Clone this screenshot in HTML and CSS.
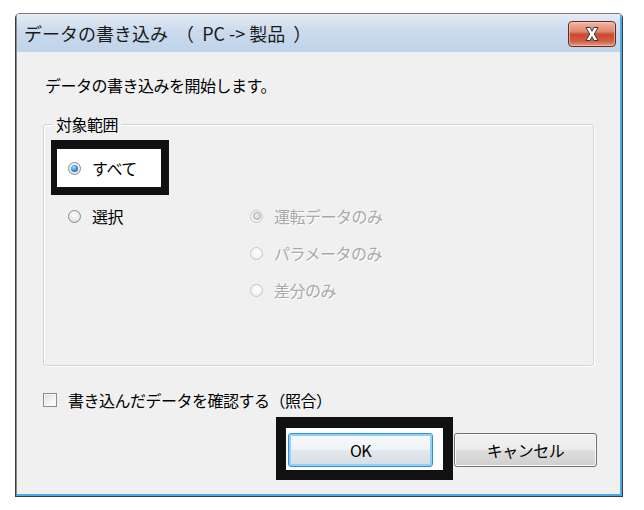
FILE: index.html
```html
<!DOCTYPE html>
<html lang="ja">
<head>
<meta charset="utf-8">
<title>データの書き込み</title>
<link rel="stylesheet" href="styles.css">
</head>
<body>
<div class="window">
  <div class="frame">
    <div class="titlebar">
      <span class="title">データの書き込み  （  PC -&gt; 製品  ）</span>
      <span class="close">
        <svg width="18" height="16" viewBox="0 0 18 16"><path d="M3 1.5 L7.2 1.5 L9 5.3 L10.8 1.5 L15 1.5 L11.3 8 L15 14.5 L10.8 14.5 L9 10.7 L7.2 14.5 L3 14.5 L6.7 8 Z" fill="#ffffff" stroke="#3c3c3c" stroke-width="1" stroke-linejoin="round"/></svg>
      </span>
    </div>
    <div class="content">
      <p class="intro">データの書き込みを開始します。</p>
      <fieldset class="group">
        <legend>対象範囲</legend>
        <div class="mark mark-all">
          <label class="opt"><span class="radio"><span class="dot"></span></span>すべて</label>
        </div>
        <div class="select-row">
          <label class="opt opt-select"><span class="radio"></span>選択</label>
          <div class="sub">
            <label class="opt disabled"><span class="radio"><span class="dot"></span></span>運転データのみ</label>
            <label class="opt disabled"><span class="radio"></span>パラメータのみ</label>
            <label class="opt disabled"><span class="radio"></span>差分のみ</label>
          </div>
        </div>
      </fieldset>
      <label class="check"><span class="box"></span>書き込んだデータを確認する（照合）</label>
      <div class="buttons">
        <div class="mark mark-ok"><button class="btn default">OK</button></div>
        <button class="btn cancel">キャンセル</button>
      </div>
    </div>
  </div>
</div>
</body>
</html>
```

FILE: styles.css
```css
* { box-sizing: border-box; }

body {
  margin: 0;
  background: #ffffff;
  font-family: "Noto Sans CJK JP", "Noto Sans", sans-serif;
  color: #000;
}

.window {
  margin: 13px 0 0 15px;
  width: 608px;
  height: 484px;
  border: 1px solid #3a3a3a;
  border-top-color: #7a7a7a;
  border-radius: 5px 5px 0 0;
  overflow: hidden;
}

.frame {
  height: 100%;
  background: #f0f0f0;
  border-left: 1px solid #8a8a8a;
  border-right: 2px solid #48aaea;
  border-bottom: 2px solid #48aaea;
  display: flex;
  flex-direction: column;
}

.titlebar {
  height: 38px;
  flex: none;
  display: flex;
  align-items: center;
  justify-content: space-between;
  padding-left: 7px;
  background: linear-gradient(#e4ecf5 0%, #cbdaec 45%, #bfd3e9 100%);
}

.title {
  font-size: 18px;
  color: #1a1a1a;
  white-space: pre;
}

.close {
  align-self: flex-start;
  margin-top: 7px;
  margin-right: 4px;
  width: 48px;
  height: 26px;
  border: 1px solid #5e2a22;
  border-radius: 4px;
  background: linear-gradient(#efb6a6 0%, #e3846c 40%, #cc4a30 52%, #d2603f 80%, #e89c84 100%);
  box-shadow: inset 0 0 0 1px rgba(255, 215, 200, 0.55);
  display: flex;
  align-items: center;
  justify-content: center;
}

.content {
  flex: 1;
  padding: 0 23px 0 26px;
}

.intro {
  margin: 22px 0 0;
  padding-left: 2px;
  height: 22px;
  line-height: 22px;
  font-size: 16px;
  letter-spacing: -0.5px;
}

.group {
  margin: 17px 0 0;
  padding: 0 0 64px 0;
  width: 551px;
  min-width: 0;
  border: 1px solid #d3d3d3;
  border-radius: 3px;
  box-shadow: inset 1px 1px 0 #ffffff, 1px 1px 0 #ffffff;
}

.group legend {
  margin-left: 9px;
  padding: 0 3px;
  line-height: 22px;
  font-size: 16px;
  letter-spacing: -0.5px;
}

.mark {
  border-style: solid;
  border-color: #111111;
  background: #ffffff;
}

.mark-all {
  margin: 5px 0 0 7px;
  width: 118px;
  height: 55px;
  border-width: 9px 8px 8px 6px;
  padding-left: 11px;
  display: flex;
  align-items: center;
}

.opt {
  display: flex;
  align-items: center;
  height: 22px;
  font-size: 16px;
  letter-spacing: -0.5px;
  white-space: nowrap;
}

.radio {
  flex: none;
  width: 13px;
  height: 13px;
  margin-right: 11px;
  border-radius: 50%;
  border: 1px solid #8c8c8c;
  background: radial-gradient(circle at 50% 35%, #ffffff 0%, #e6e6e6 65%, #cfcfcf 100%);
  display: flex;
  align-items: center;
  justify-content: center;
}

.dot {
  width: 7px;
  height: 7px;
  border-radius: 50%;
  background: radial-gradient(circle at 40% 35%, #a8dcff 0%, #2f86d6 55%, #18599e 100%);
}

.select-row {
  margin-top: 10px;
  padding-left: 24px;
  display: flex;
  align-items: flex-start;
}

.opt-select {
  width: 182px;
}

.sub {
  display: flex;
  flex-direction: column;
  gap: 15px;
}

.disabled {
  color: #a9a9a9;
  text-shadow: 1px 1px 0 #ffffff;
}

.disabled .radio {
  border-color: #c6c6c6;
  background: radial-gradient(circle at 50% 35%, #ffffff 0%, #f2f2f2 70%, #e6e6e6 100%);
}

.disabled .dot {
  width: 8px;
  height: 8px;
  border: 1px solid #a6a6a6;
  background: radial-gradient(circle at 40% 35%, #f0f0f0 0%, #c8c8c8 100%);
}

.check {
  margin-top: 23px;
  display: flex;
  align-items: center;
  height: 22px;
  font-size: 16px;
  letter-spacing: -0.5px;
  white-space: nowrap;
}

.box {
  flex: none;
  width: 14px;
  height: 14px;
  margin-right: 11px;
  border: 1px solid #8c8c8c;
  background: linear-gradient(135deg, #dcdcdc 0%, #f4f4f4 60%, #ffffff 100%);
  box-shadow: inset 0 0 0 1px #f6f6f6;
}

.buttons {
  margin-top: 6px;
  display: flex;
  justify-content: flex-end;
  align-items: flex-start;
}

.mark-ok {
  border-width: 11px 10px 10px 10px;
  padding: 5px 10px 3px 2px;
}

.btn {
  display: block;
  height: 34px;
  padding: 0;
  border: 1px solid #707070;
  border-radius: 3px;
  background: linear-gradient(#f3f3f3 0%, #ebebeb 48%, #dddddd 52%, #cfcfcf 100%);
  box-shadow: inset 0 0 0 1px #fbfbfb;
  font-family: "Noto Sans CJK JP", "Noto Sans", sans-serif;
  font-size: 16px;
  letter-spacing: -0.5px;
  color: #000;
}

.default {
  width: 145px;
  border-color: #2f8fd8;
  background: linear-gradient(#f8fbfd 0%, #eef3f7 48%, #e2e8ed 52%, #d6dde3 100%);
  box-shadow: inset 0 0 0 2px #8fd2f6;
}

.cancel {
  width: 143px;
  margin-top: 16px;
  margin-left: 1px;
}
```
